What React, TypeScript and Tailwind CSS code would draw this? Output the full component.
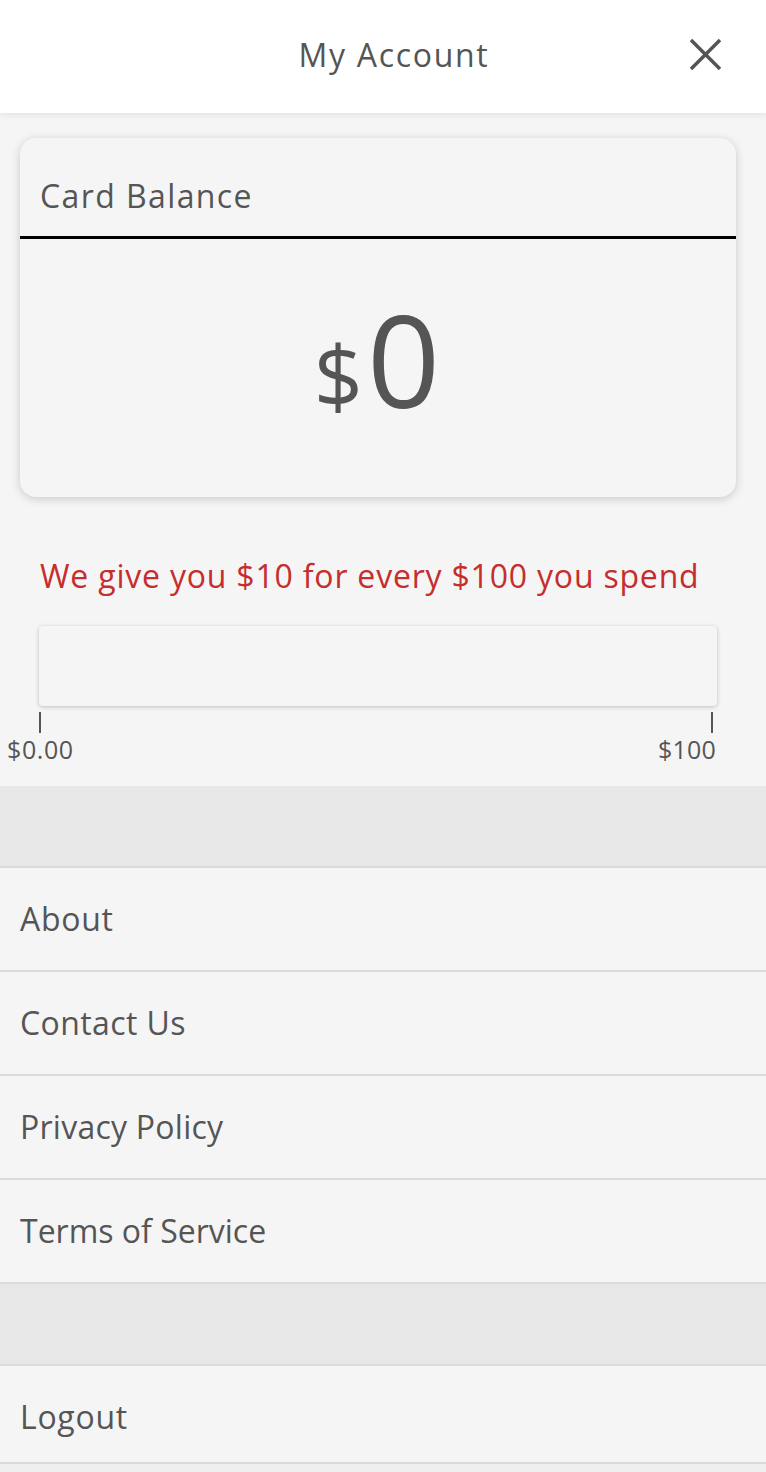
import React from "react";

const font = { fontFamily: '"Open Sans", "Noto Sans", sans-serif' };

function Row({ label, track, h = "h-[104px]", extra = "" }: { label: string; track: string; h?: string; extra?: string }) {
  return (
    <div className={`${h} ${extra} flex items-center px-5 border-b-2 border-[#dadada] bg-[#f5f5f5]`}>
      <span className={`text-[32px] text-[#555555] ${track}`}>{label}</span>
    </div>
  );
}

export default function App() {
  return (
    <div className="w-[766px] min-h-[1472px] bg-[#efefef] text-[#555555]" style={font}>
      <div className="relative h-[113px] bg-white flex items-center justify-center pb-[4px] shadow-[0_2px_6px_rgba(0,0,0,0.08)] z-10">
        <span className="text-[32px] tracking-[1.7px] text-[#555555] ml-[22px]">My Account</span>
        <svg className="absolute right-[44px] top-[38px]" width="33" height="33" viewBox="0 0 33 33">
          <path d="M2 2 L31 31 M31 2 L2 31" stroke="#555555" strokeWidth="3.5" fill="none" />
        </svg>
      </div>
      <div className="bg-[#f5f5f5] pt-[25px] pb-[24px]">
        <div className="ml-5 mr-[30px] rounded-2xl bg-[#f5f5f5] shadow-[0_2px_10px_rgba(0,0,0,0.18)] overflow-hidden">
          <div className="h-[101px] flex items-center px-5 pt-[18px] border-b-[3px] border-black">
            <span className="text-[32px] tracking-[1.4px]">Card Balance</span>
          </div>
          <div className="h-[258px] flex items-baseline justify-center pt-[56px]">
            <span className="text-[86px] leading-none mr-[4px]">$</span>
            <span className="text-[128px] leading-none tracking-[2px]">0</span>
          </div>
        </div>
        <div className="mt-[63px] px-10 text-[32px] text-[#c62d2d] tracking-[0.8px] leading-none">
          We give you $10 for every $100 you spend
        </div>
        <div className="mt-[34px] ml-[39px] mr-[49px] h-[80px] rounded bg-[#f5f5f5] shadow-[0_1px_4px_rgba(0,0,0,0.22)]" />
        <div className="flex justify-between mt-[6px]">
          <div className="flex flex-col items-start">
            <div className="ml-[39px] w-[2px] h-[21px] bg-[#555555]" />
            <span className="ml-[7px] text-[25px] leading-none mt-[4px] tracking-[0.6px]">$0.00</span>
          </div>
          <div className="flex flex-col items-end mr-[50px]">
            <div className="mr-[3px] w-[2px] h-[21px] bg-[#555555]" />
            <span className="text-[25px] leading-none mt-[4px] tracking-[0.2px]">$100</span>
          </div>
        </div>
      </div>
      <div className="h-[82px] bg-[#e7e7e7] border-b-2 border-[#dadada]" />
      <Row label="About" track="tracking-[0.7px]" />
      <Row label="Contact Us" track="tracking-[0.4px]" />
      <Row label="Privacy Policy" track="tracking-[0.25px]" />
      <Row label="Terms of Service" track="tracking-[0px]" />
      <div className="h-[82px] bg-[#e7e7e7] border-b-2 border-[#dadada]" />
      <Row label="Logout" track="tracking-[0.7px]" h="h-[98px]" extra="pt-[6px]" />
    </div>
  );
}
